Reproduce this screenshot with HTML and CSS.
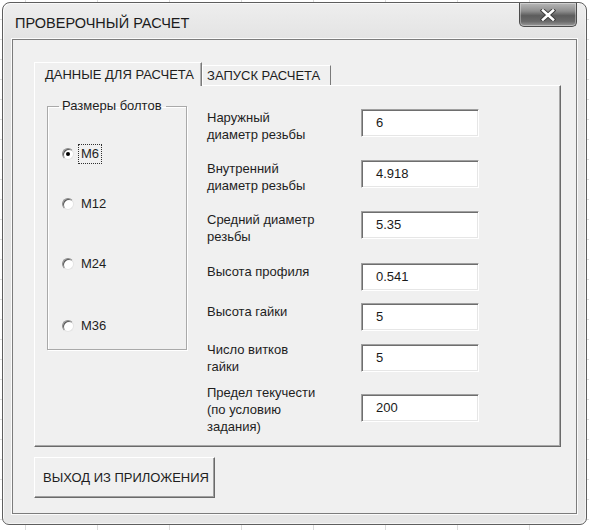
FILE: index.html
```html
<!DOCTYPE html>
<html lang="ru">
<head>
<meta charset="utf-8">
<title>ПРОВЕРОЧНЫЙ РАСЧЕТ</title>
<link rel="stylesheet" href="styles.css">
</head>
<body>
<div class="window">
  <div class="titlebar">
    <span class="title">ПРОВЕРОЧНЫЙ РАСЧЕТ</span>
    <div class="close">
      <svg width="16" height="12" viewBox="0 0 16 12">
        <path d="M3 1.5 L13 10.5 M13 1.5 L3 10.5" stroke="#3a3a3a" stroke-width="4.4" stroke-linecap="square" fill="none"/>
        <path d="M3 1.5 L13 10.5 M13 1.5 L3 10.5" stroke="#ffffff" stroke-width="2.6" stroke-linecap="square" fill="none"/>
      </svg>
    </div>
  </div>
  <div class="client">
    <div class="tabs">
      <div class="tab active">ДАННЫЕ ДЛЯ РАСЧЕТА</div>
      <div class="tab">ЗАПУСК РАСЧЕТА</div>
    </div>
    <div class="panel">
      <fieldset class="group">
        <legend>Размеры болтов</legend>
        <div class="radio r1"><span class="dot checked"></span><span class="rlabel focus">M6</span></div>
        <div class="radio r2"><span class="dot"></span><span class="rlabel">M12</span></div>
        <div class="radio r3"><span class="dot"></span><span class="rlabel">M24</span></div>
        <div class="radio r4"><span class="dot"></span><span class="rlabel">M36</span></div>
      </fieldset>
      <div class="fields">
        <div class="lbl">Наружный<br>диаметр резьбы</div>
        <div class="box">6</div>
        <div class="lbl">Внутренний<br>диаметр резьбы</div>
        <div class="box">4.918</div>
        <div class="lbl">Средний диаметр<br>резьбы</div>
        <div class="box">5.35</div>
        <div class="lbl">Высота профиля</div>
        <div class="box">0.541</div>
        <div class="lbl">Высота гайки</div>
        <div class="box">5</div>
        <div class="lbl up3">Число витков<br>гайки</div>
        <div class="box">5</div>
        <div class="lbl up10">Предел текучести<br>(по условию<br>задания)</div>
        <div class="box">200</div>
      </div>
    </div>
    <div class="exit">ВЫХОД ИЗ ПРИЛОЖЕНИЯ</div>
  </div>
</div>
</body>
</html>
```
FILE: styles.css
```css
html, body {
  margin: 0;
  padding: 0;
}
body {
  width: 589px;
  height: 530px;
  overflow: hidden;
  background-color: #ffffff;
  background-image:
    repeating-linear-gradient(to right, transparent 0 25px, #dcdcdc 25px 26px, transparent 26px 72px),
    repeating-linear-gradient(to bottom, transparent 0 19px, #dcdcdc 19px 20px);
  font-family: "Liberation Sans", Arial, sans-serif;
  color: #1e1e1e;
}
.window {
  box-sizing: border-box;
  margin: 2px 0 0 2px;
  width: 585px;
  height: 523px;
  border: 1px solid #5e5e5e;
  border-radius: 8px 8px 7px 7px;
  background: linear-gradient(to bottom, #eeeeee 0, #e2e2e2 40px, #e6e6e6 100%);
  box-shadow: inset 1px 1px 0 #fafafa, inset -1px -1px 0 #f4f4f4;
  padding: 0 9px 9px 9px;
  display: flex;
  flex-direction: column;
}
.titlebar {
  height: 36px;
  display: flex;
  align-items: flex-start;
  justify-content: space-between;
}
.title {
  font-size: 14.5px;
  line-height: 16px;
  margin-top: 12px;
  margin-left: 3px;
  color: #1c1c1c;
}
.close {
  box-sizing: border-box;
  width: 58px;
  height: 24px;
  border: 1px solid #4c4c4c;
  border-top: none;
  border-radius: 0 0 5px 5px;
  background: linear-gradient(to bottom, #b8b8b8 0, #8e8e8e 35%, #5c5c5c 55%, #6a6a6a 80%, #9a9a9a 100%);
  box-shadow: inset 0 0 0 1px rgba(255,255,255,0.35);
  display: flex;
  align-items: center;
  justify-content: center;
}
.client {
  box-sizing: border-box;
  height: 475px;
  border: 1px solid #7c7c7c;
  background: #f0f0f0;
  padding: 22px 15px 0 21px;
  box-shadow: 0 0 0 1px #fbfbfb;
}
.tabs {
  display: flex;
  align-items: flex-end;
  height: 23px;
  position: relative;
  z-index: 1;
}
.tab {
  box-sizing: border-box;
  font-size: 13px;
  line-height: 15px;
  padding: 0 10px 0 4px;
  height: 20px;
  display: flex;
  align-items: center;
  border-top: 1px solid #ffffff;
  border-left: 1px solid #ffffff;
  border-right: 1px solid #7a7a7a;
  background: #f0f0f0;
  color: #1e1e1e;
}
.tab.active {
  height: 24px;
  margin-bottom: -1px;
  padding: 0 7px 0 10px;
  box-shadow: inset -1px 0 0 #b0b0b0;
}
.panel {
  box-sizing: border-box;
  height: 362px;
  border-top: 1px solid #ffffff;
  border-left: 1px solid #ffffff;
  border-right: 1px solid #6a6a6a;
  border-bottom: 1px solid #6a6a6a;
  box-shadow: inset -1px -1px 0 #a8a8a8;
  display: flex;
  align-items: flex-start;
}
.group {
  box-sizing: border-box;
  margin: 12px 0 0 12px;
  padding: 0;
  width: 140px;
  height: 252px;
  border: 1px solid #a9a9a9;
  box-shadow: inset 1px 1px 0 #ffffff, 1px 1px 0 #ffffff;
  min-inline-size: 0;
}
.group legend {
  font-size: 13px;
  line-height: 16px;
  padding: 0 4px 0 3px;
  margin-left: 11px;
}
.radio {
  display: flex;
  align-items: center;
  height: 20px;
  font-size: 13px;
  padding-left: 14px;
}
.r1 { margin-top: 30px; }
.r2 { margin-top: 30px; }
.r3 { margin-top: 40px; }
.r4 { margin-top: 42px; }
.dot {
  box-sizing: border-box;
  width: 12px;
  height: 12px;
  border-radius: 50%;
  border: 1px solid;
  border-color: #8c8c8c #e4e4e4 #e4e4e4 #8c8c8c;
  background: #ffffff;
  box-shadow: inset 1px 1px 0 #5a5a5a;
  display: flex;
  align-items: center;
  justify-content: center;
}
.dot.checked::after {
  content: "";
  width: 4px;
  height: 4px;
  border-radius: 50%;
  background: #000000;
}
.rlabel {
  margin-left: 4px;
  padding: 0 2px;
  line-height: 18px;
  border: 1px dotted transparent;
}
.rlabel.focus {
  border-color: #303030;
}
.fields {
  margin: 23px 0 0 20px;
  display: grid;
  grid-template-columns: 154px 118px;
  grid-template-rows: 51px 51px 52px 40px 41px 50px auto;
}
.lbl {
  font-size: 13px;
  line-height: 17px;
  color: #1e1e1e;
}
.lbl.up3 { margin-top: -3px; }
.lbl.up10 { margin-top: -10px; }
.box {
  box-sizing: border-box;
  width: 118px;
  height: 28px;
  background: #ffffff;
  border: 1px solid;
  border-color: #a0a0a0 #ffffff #ffffff #a0a0a0;
  box-shadow: inset 1px 1px 0 #6e6e6e, inset -1px -1px 0 #e6e6e6;
  font-size: 13px;
  line-height: 26px;
  padding-left: 14px;
  color: #1a1a1a;
}
.exit {
  box-sizing: border-box;
  margin-top: 10px;
  width: 181px;
  height: 41px;
  border: 1px solid;
  border-color: #ffffff #6a6a6a #6a6a6a #ffffff;
  box-shadow: inset -1px -1px 0 #a0a0a0;
  background: #f0f0f0;
  font-size: 13px;
  display: flex;
  align-items: center;
  padding-left: 8px;
  color: #1e1e1e;
}
```
